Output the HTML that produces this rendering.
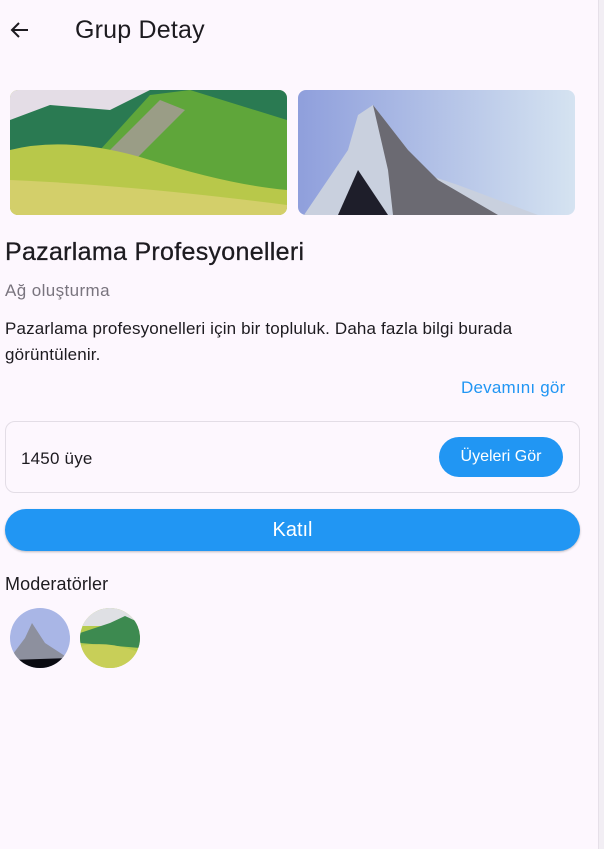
<!DOCTYPE html>
<html><head><meta charset="utf-8"><style>
body{margin:0;width:604px;height:849px;background:#fdf7fe;font-family:"Liberation Sans",sans-serif;position:relative;overflow:hidden;color:#1d1b20}
.edge{position:absolute;left:598px;top:0;width:6px;height:849px;background:#f2eef4;border-left:1px solid #e6e0e9}
.t{position:absolute;white-space:nowrap}
</style></head><body>
<div class="edge"></div>
<svg style="position:absolute;left:8px;top:18px" width="24" height="24" viewBox="0 0 24 24"><path d="M20 12H5M11 5l-7 7 7 7" fill="none" stroke="#1d1b20" stroke-width="2"/></svg>
<div class="t" style="left:75px;top:16px;font-size:25px;letter-spacing:0.2px">Grup Detay</div>

<svg style="position:absolute;left:10px;top:90px;border-radius:8px" width="277" height="125" viewBox="0 0 277 125">
<rect width="277" height="125" fill="#b9d14a"/>
<rect width="277" height="30" fill="#e4dde6"/>
<path d="M0 30 L40 15 L100 20 L140 0 L277 0 L277 100 L0 70Z" fill="#2a7a52"/>
<path d="M90 60 L140 5 L180 0 L277 30 L277 110 L120 80Z" fill="#5fa63a"/>
<path d="M100 60 L150 10 L175 20 L120 75Z" fill="#9a9d86"/>
<path d="M0 60 Q60 45 140 70 T277 100 L277 125 L0 125Z" fill="#b8c84a"/>
<path d="M0 90 Q120 95 277 115 L277 125 L0 125Z" fill="#d3cf6a"/>
</svg>
<svg style="position:absolute;left:298px;top:90px;border-radius:8px" width="277" height="125" viewBox="0 0 277 125">
<defs><linearGradient id="s" x1="0" x2="1"><stop offset="0" stop-color="#8f9fdc"/><stop offset="1" stop-color="#d5e3f1"/></linearGradient></defs>
<rect width="277" height="125" fill="url(#s)"/>
<path d="M6 125 L50 60 L60 25 L75 15 L110 60 L130 85 L160 95 L240 125Z" fill="#c9d0de"/>
<path d="M75 15 L110 60 L140 90 L200 125 L95 125 L90 80Z" fill="#6b6a72"/>
<path d="M40 125 L60 80 L80 110 L90 125Z" fill="#1e1e2a"/>
</svg>

<div class="t" style="left:5px;top:238px;font-size:25px;font-weight:500;-webkit-text-stroke:0.3px #1d1b20;letter-spacing:0.3px">Pazarlama Profesyonelleri</div>
<div class="t" style="left:5px;top:281px;font-size:17px;letter-spacing:0.4px;color:#79747e">Ağ oluşturma</div>
<div class="t" style="left:5px;top:316px;font-size:17px;letter-spacing:0.15px;line-height:26px;white-space:normal;width:575px">Pazarlama profesyonelleri için bir topluluk. Daha fazla bilgi burada görüntülenir.</div>
<div class="t" style="left:461px;top:378px;font-size:17px;letter-spacing:0.2px;color:#2196f3">Devamını gör</div>

<div style="position:absolute;left:5px;top:421px;width:575px;height:72px;border:1px solid #e3dde6;border-radius:10px;box-sizing:border-box"></div>
<div class="t" style="left:21px;top:449px;font-size:17px;letter-spacing:0.2px">1450 üye</div>
<div class="t" style="left:439px;top:437px;width:124px;height:40px;border-radius:20px;background:#2196f3;color:#fff;font-size:16px;line-height:40px;text-align:center">Üyeleri Gör</div>

<div class="t" style="left:5px;top:509px;width:575px;height:42px;border-radius:21px;background:#2196f3;color:#fff;font-size:20px;line-height:42px;text-align:center;box-shadow:0 1px 2px rgba(0,0,0,.25)">Katıl</div>

<div class="t" style="left:5px;top:574px;font-size:18px;letter-spacing:0.1px">Moderatörler</div>
<svg style="position:absolute;left:10px;top:608px" width="60" height="60" viewBox="0 0 60 60"><clipPath id="c1"><circle cx="30" cy="30" r="30"/></clipPath><g clip-path="url(#c1)"><rect width="60" height="60" fill="#a9b6e6"/><path d="M0 50 L15 30 L22 15 L35 35 L55 48 L60 60 L0 60Z" fill="#8d909e"/><path d="M0 52 L60 50 L60 60 L0 60Z" fill="#0b0b12"/></g></svg>
<svg style="position:absolute;left:80px;top:608px" width="60" height="60" viewBox="0 0 60 60"><clipPath id="c2"><circle cx="30" cy="30" r="30"/></clipPath><g clip-path="url(#c2)"><rect width="60" height="60" fill="#b6cb4e"/><rect width="60" height="18" fill="#dfe0e4"/><path d="M0 25 L30 15 L45 8 L60 15 L60 40 L0 35Z" fill="#3d8a50"/><path d="M0 38 Q30 32 60 45 L60 60 L0 60Z" fill="#c8cf58"/></g></svg>
</body></html>
